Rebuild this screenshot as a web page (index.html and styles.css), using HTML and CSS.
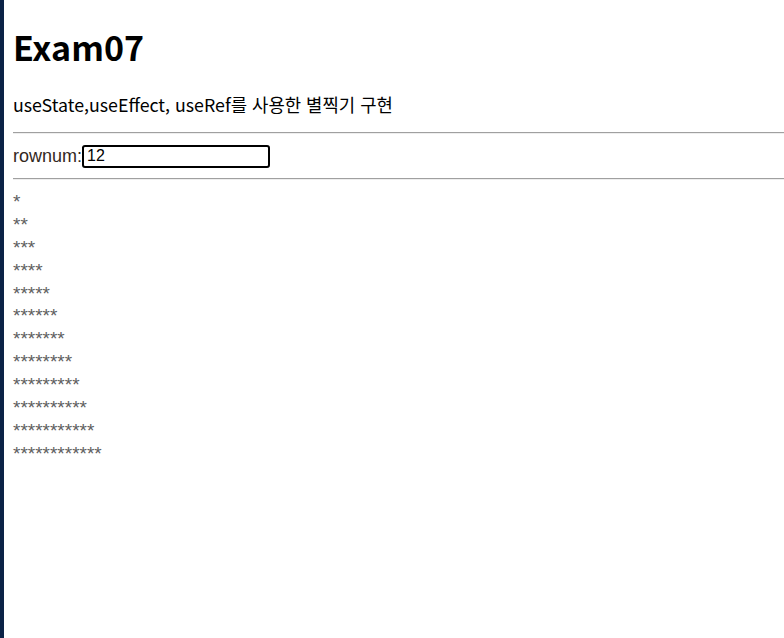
FILE: index.html
```html
<!DOCTYPE html>
<html lang="ko">
<head>
<meta charset="utf-8">
<title>Exam07</title>
<link rel="stylesheet" href="styles.css">
</head>
<body>
<div class="frame">
  <div class="strip"></div>
  <main class="content">
    <h1 class="title">Exam07</h1>
    <p class="desc">useState,useEffect, useRef를 사용한 별찍기 구현</p>
    <hr class="rule">
    <div class="row">
      <label class="label" for="rownum">rownum:</label><input id="rownum" class="input" type="text" value="12">
    </div>
    <hr class="rule">
    <div class="stars">
      <div class="star-line">*</div>
      <div class="star-line">**</div>
      <div class="star-line">***</div>
      <div class="star-line">****</div>
      <div class="star-line">*****</div>
      <div class="star-line">******</div>
      <div class="star-line">*******</div>
      <div class="star-line">********</div>
      <div class="star-line">*********</div>
      <div class="star-line">**********</div>
      <div class="star-line">***********</div>
      <div class="star-line">************</div>
    </div>
  </main>
</div>
</body>
</html>
```
FILE: styles.css
```css
html, body {
  margin: 0;
  padding: 0;
  background: #ffffff;
}
body {
  font-family: "Noto Sans CJK KR", "Noto Sans", sans-serif;
  color: #000;
}
.frame {
  display: flex;
  min-height: 638px;
}
.strip {
  width: 4px;
  flex: none;
  background: #0b2246;
}
.content {
  flex: 1;
  padding-left: 9px;
}
.title {
  margin: 23px 0 0;
  font-family: "Noto Sans CJK KR", sans-serif;
  font-size: 34px;
  font-weight: 700;
  line-height: 48px;
}
.desc {
  margin: 20px 0 0;
  font-size: 17.8px;
  line-height: 26px;
}
.rule {
  margin: 0;
  border: 0;
  border-top: 1px solid #a0a0a0;
  border-bottom: 1px solid #eeeeee;
  height: 0;
}
.desc + .rule {
  margin-top: 15px;
}
.row {
  display: flex;
  align-items: center;
  height: 44px;
  font-family: "Liberation Sans", Arial, sans-serif;
  font-size: 18px;
  color: #33281e;
}
.label {
  line-height: 20px;
}
.input {
  box-sizing: border-box;
  width: 188px;
  height: 23px;
  margin: 0;
  padding: 0 3px;
  border: 2px solid #000;
  border-radius: 3px;
  font-family: "Liberation Sans", Arial, sans-serif;
  font-size: 16px;
  color: #000;
  outline: none;
}
.stars {
  padding-top: 12px;
  font-family: "Liberation Sans", Arial, sans-serif;
  font-size: 19px;
  color: #606060;
}
.star-line {
  height: 22.9px;
  line-height: 20px;
}
```
